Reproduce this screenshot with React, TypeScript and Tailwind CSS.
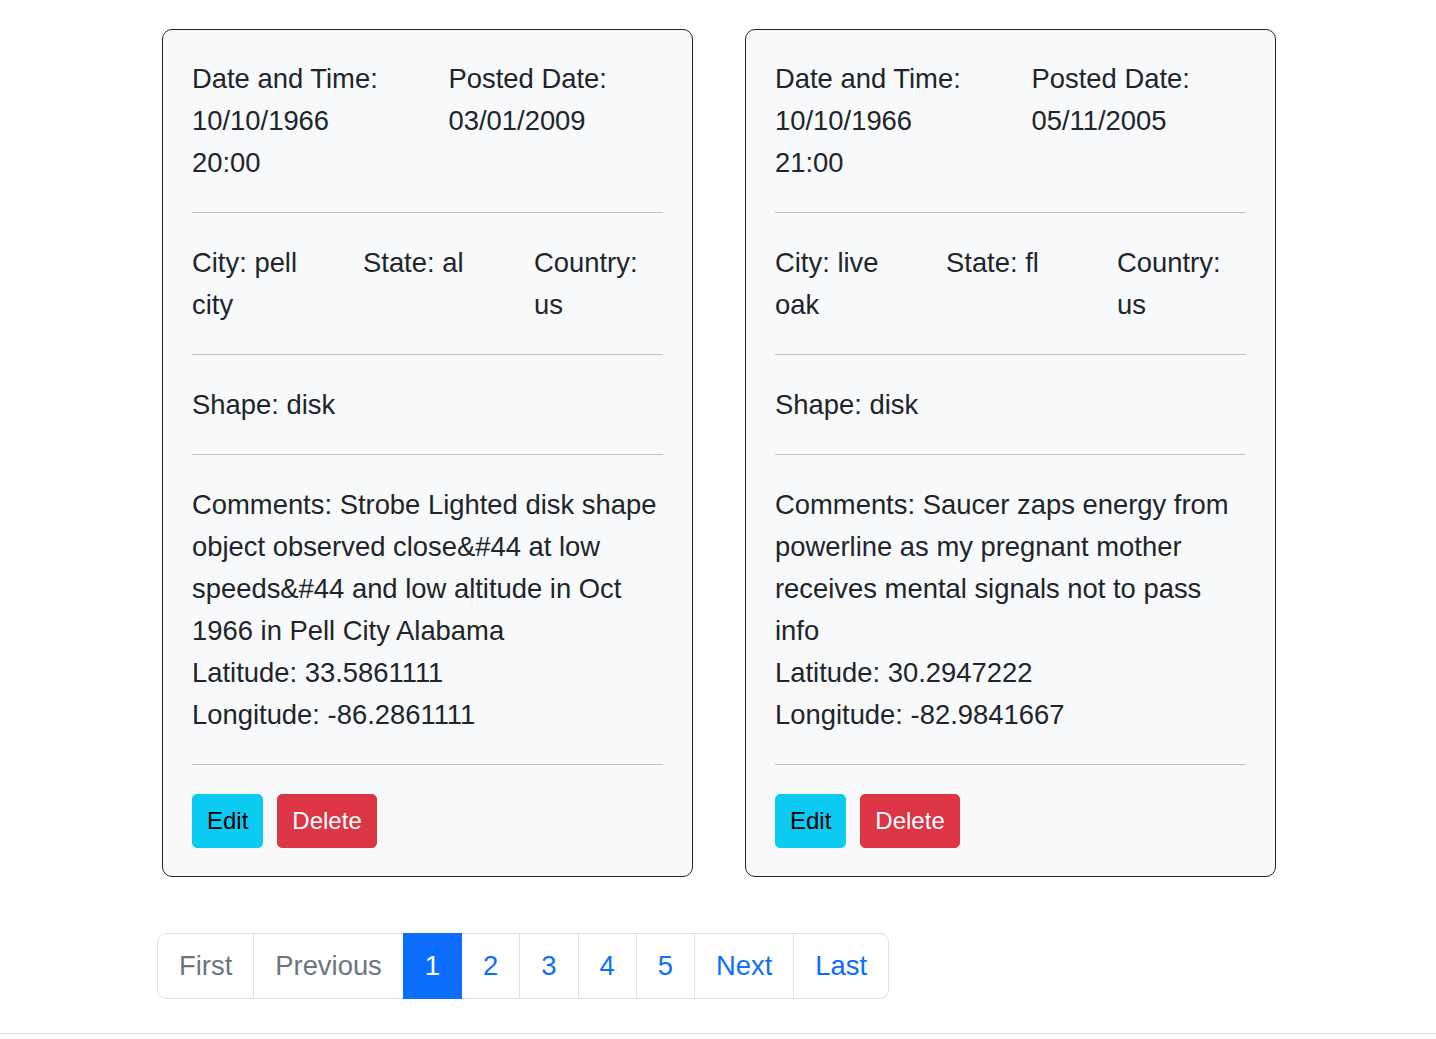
import React from 'react';

type Sighting = {
  dateTime: string;
  posted: string;
  city: string;
  state: string;
  country: string;
  shape: string;
  comments: string;
  latitude: string;
  longitude: string;
};

const sightings: Sighting[] = [
  {
    dateTime: '10/10/1966 20:00',
    posted: '03/01/2009',
    city: 'pell city',
    state: 'al',
    country: 'us',
    shape: 'disk',
    comments:
      'Strobe Lighted disk shape object observed close&#44 at low speeds&#44 and low altitude in Oct 1966 in Pell City Alabama',
    latitude: '33.5861111',
    longitude: '-86.2861111',
  },
  {
    dateTime: '10/10/1966 21:00',
    posted: '05/11/2005',
    city: 'live oak',
    state: 'fl',
    country: 'us',
    shape: 'disk',
    comments:
      'Saucer zaps energy from powerline as my pregnant mother receives mental signals not to pass info',
    latitude: '30.2947222',
    longitude: '-82.9841667',
  },
];

function Divider() {
  return <hr className="mt-[28px] mb-[29px] border-0 border-t border-[#c1c3c5]" />;
}

function SightingCard({ s }: { s: Sighting }) {
  return (
    <div className="w-[531px] rounded-[10px] border border-[#212529] bg-[#f8f9fa] px-[29px] pt-[28px] pb-[28px]">
      <div className="-mx-[21px] flex">
        <div className="flex-1 px-[21px]">
          <p className="max-w-[200px]">Date and Time: {s.dateTime}</p>
        </div>
        <div className="flex-1 px-[21px]">
          <p>Posted Date: {s.posted}</p>
        </div>
      </div>
      <Divider />
      <div className="-mx-[21px] flex">
        <div className="flex-1 px-[21px]">City: {s.city}</div>
        <div className="flex-1 px-[21px]">State: {s.state}</div>
        <div className="flex-1 px-[21px]">Country: {s.country}</div>
      </div>
      <Divider />
      <p>Shape: {s.shape}</p>
      <Divider />
      <p>Comments: {s.comments}</p>
      <p>Latitude: {s.latitude}</p>
      <p>Longitude: {s.longitude}</p>
      <Divider />
      <div className="flex gap-[14px]">
        <button className="rounded-[5px] border border-[#0dcaf0] bg-[#0dcaf0] px-[14px] py-[8px] text-[24px] leading-[36px] text-black">
          Edit
        </button>
        <button className="rounded-[5px] border border-[#dc3545] bg-[#dc3545] px-[14px] py-[8px] text-[24px] leading-[36px] text-white">
          Delete
        </button>
      </div>
    </div>
  );
}

const pages = [
  { label: 'First', kind: 'disabled' },
  { label: 'Previous', kind: 'disabled' },
  { label: '1', kind: 'active' },
  { label: '2', kind: 'link' },
  { label: '3', kind: 'link' },
  { label: '4', kind: 'link' },
  { label: '5', kind: 'link' },
  { label: 'Next', kind: 'link' },
  { label: 'Last', kind: 'link' },
];

function Pagination() {
  return (
    <ul className="flex">
      {pages.map((p, i) => {
        const first = i === 0;
        const last = i === pages.length - 1;
        let cls = 'border-[#dee2e6] bg-white text-[#0d6efd]';
        if (p.kind === 'disabled') cls = 'border-[#dee2e6] bg-white text-[#6c757d]';
        if (p.kind === 'active') cls = 'relative z-10 border-[#0d6efd] bg-[#0d6efd] text-white';
        return (
          <li
            key={p.label}
            className={`${first ? 'rounded-l-[9px]' : '-ml-px'} ${last ? 'rounded-r-[9px]' : ''} border px-[21px] py-[11px] ${cls}`}
          >
            {p.label}
          </li>
        );
      })}
    </ul>
  );
}

export default function App() {
  return (
    <div className="min-h-[1039px] bg-white font-['Liberation_Sans',Arial,sans-serif] text-[27.4px] leading-[42px] text-[#212529]">
      <div className="mx-auto w-[1116px] pl-[2px] pt-[29px]">
        <div className="flex gap-[52px]">
          {sightings.map((s) => (
            <SightingCard key={s.dateTime} s={s} />
          ))}
        </div>
        <div className="-ml-[5px] mt-[56px]">
          <Pagination />
        </div>
      </div>
      <footer className="mt-[34px] h-[40px] border-t border-[#dee2e6]" />
    </div>
  );
}
